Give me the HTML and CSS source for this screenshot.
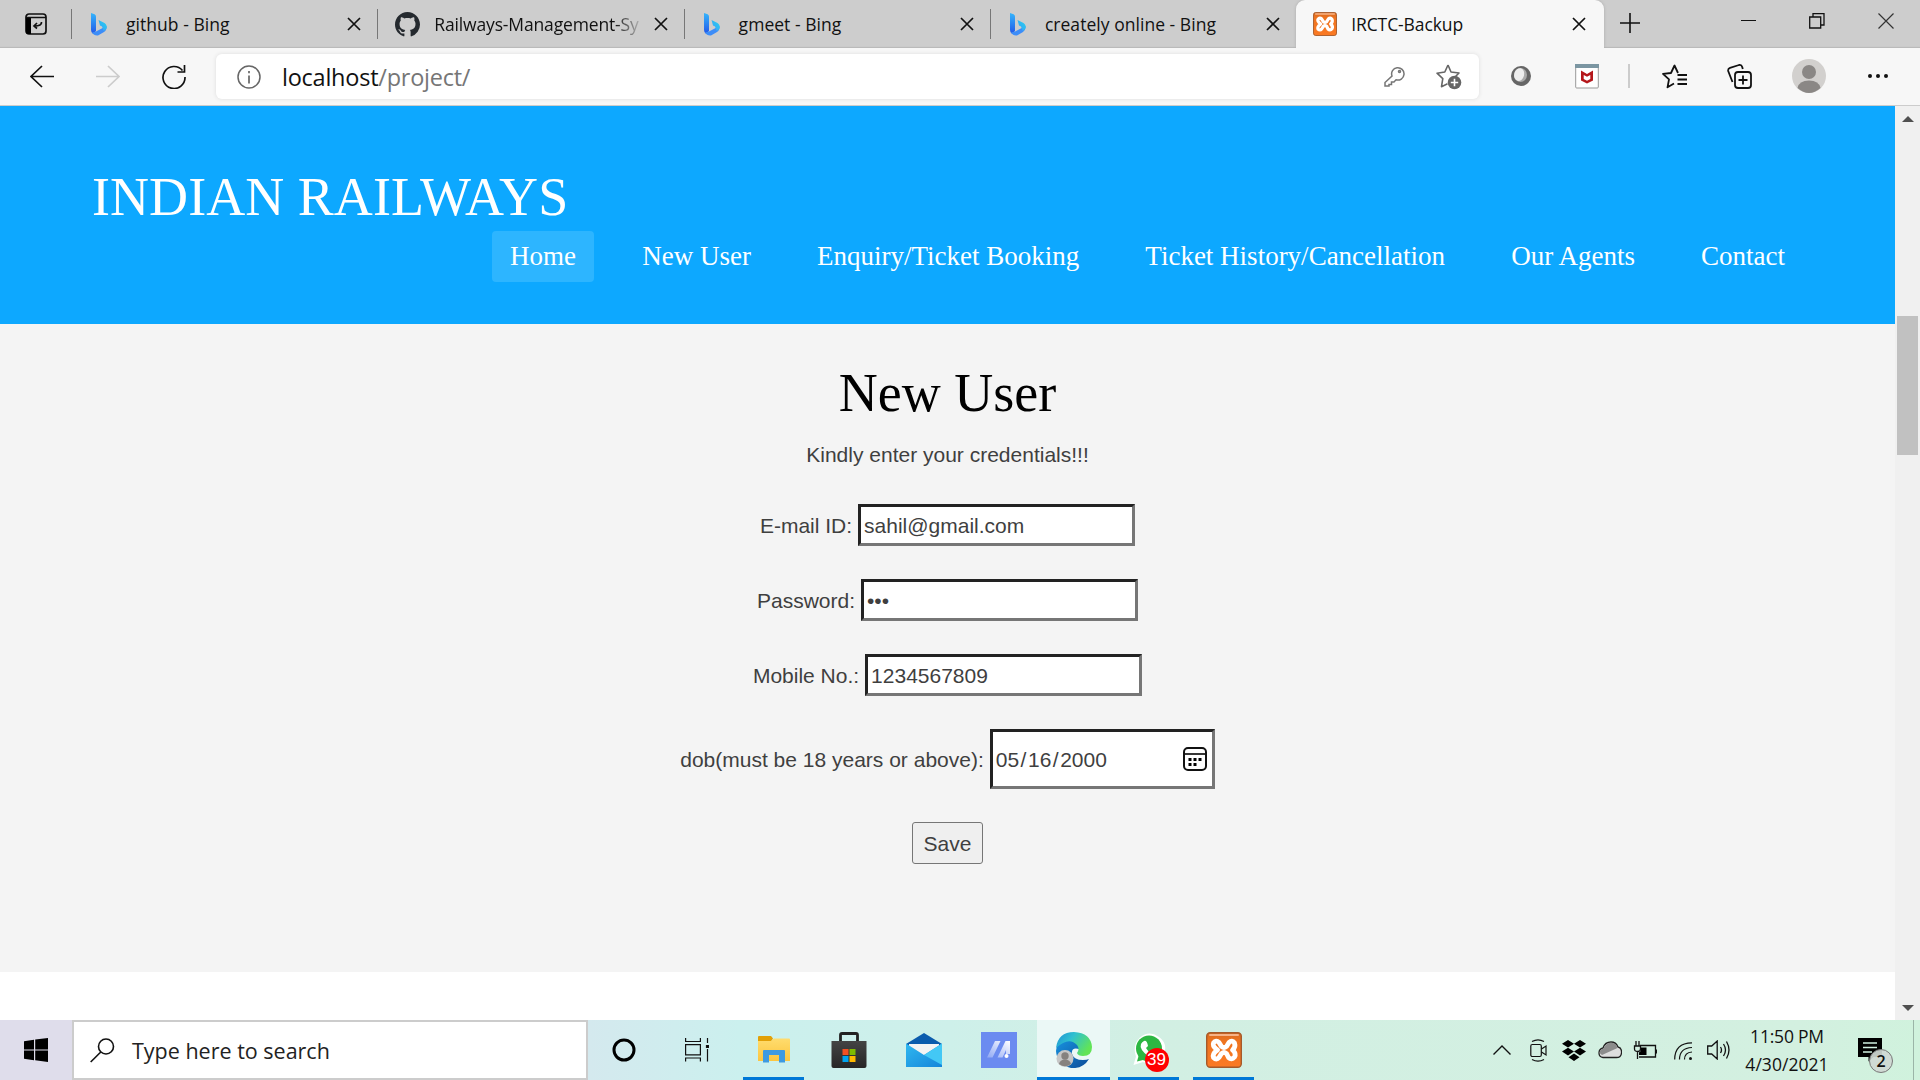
FILE: index.html
```html
<!DOCTYPE html>
<html lang="en">
<head>
<meta charset="utf-8">
<title>IRCTC-Backup</title>
<link rel="stylesheet" href="styles.css">
</head>
<body>
<svg class="defs" width="0" height="0" aria-hidden="true">
  <defs>
    <linearGradient id="bingA" x1="0" y1="0" x2="0" y2="1"><stop offset="0" stop-color="#35b5fb"/><stop offset="1" stop-color="#2257e8"/></linearGradient>
    <linearGradient id="bingB" x1="1" y1="0" x2="0" y2="1"><stop offset="0" stop-color="#25d3ef"/><stop offset="1" stop-color="#3a9cf8"/></linearGradient>
    <linearGradient id="orange" x1="0" y1="0" x2="0" y2="1"><stop offset="0" stop-color="#d96a1e"/><stop offset=".25" stop-color="#ee7420"/><stop offset="1" stop-color="#fb7a24"/></linearGradient>
    <linearGradient id="folder" x1="0" y1="0" x2="0" y2="1"><stop offset="0" stop-color="#ffdc6e"/><stop offset="1" stop-color="#fcc63f"/></linearGradient>
    <linearGradient id="bag" x1="0" y1="0" x2="0" y2="1"><stop offset="0" stop-color="#444"/><stop offset="1" stop-color="#262626"/></linearGradient>
    <linearGradient id="mail" x1="0" y1="0" x2="1" y2="1"><stop offset="0" stop-color="#2fb8f0"/><stop offset="1" stop-color="#1585da"/></linearGradient>
    <linearGradient id="edgeTop" x1="0" y1="0" x2="1" y2=".5"><stop offset="0" stop-color="#1d8fd6"/><stop offset=".45" stop-color="#2fc1d0"/><stop offset="1" stop-color="#62e456"/></linearGradient>
    <linearGradient id="edgeLow" x1="0" y1="0" x2="1" y2="1"><stop offset="0" stop-color="#1793e0"/><stop offset="1" stop-color="#0c4c98"/></linearGradient>
    <linearGradient id="ma" x1="0" y1="1" x2="1" y2="0"><stop offset="0" stop-color="#8fa8f5"/><stop offset="1" stop-color="#fff"/></linearGradient>
    <symbol id="bing" viewBox="0 0 16 23">
      <path fill="url(#bingA)" d="M0 0l3.600 1.300Q5 2 5 3.600V18l-3 2.800Q0 19.500 0 17z"/>
      <path fill="#3d8df8" d="M1 19.500Q3 23 7 22.500L13 19Q16 17 15.500 13L5 18.500Z"/>
      <path fill="url(#bingB)" d="M7.500 7l6 3q2.500 1.500 2.200 5-.7 2-3 3L11 13.500 9 12.500z"/>
    </symbol>
    <symbol id="close" viewBox="0 0 14 14"><path d="M1 1l12 12M13 1L1 13" fill="none" stroke="#111" stroke-width="1.700"/></symbol>
    <symbol id="xampp" viewBox="0 0 36 36">
      <rect x=".7" y=".7" width="34.600" height="34.600" rx="3.500" fill="url(#orange)" stroke="#a65a2a" stroke-width="1.400"/>
      <path d="M4 3h28" stroke="#f6b387" stroke-width="2" stroke-linecap="round"/>
      <path d="M11.500 18Q6 14 7.500 11Q10 7.500 13 10.500L15.500 14.500Q18 16.500 20.500 14.500L23 10.500Q26 7.500 28.500 11Q30 15 26.500 18Q30.500 21.500 28.500 25Q25.500 28.500 22.500 25.500L20.500 21.500Q18 19.500 15.500 21.500L13 25.500Q10.500 28.500 7.500 25.500Q6 22 11.500 18" fill="none" stroke="#fff" stroke-width="4.800" stroke-linecap="round" stroke-linejoin="round"/>
    </symbol>
  </defs>
</svg>

<header class="tabs">
  <div class="tab-menu"><svg width="22" height="22" viewBox="0 0 22 22"><rect x="1" y="1" width="20" height="20" rx="3" fill="none" stroke="#111" stroke-width="1.700"/><path d="M1 4h5v17H3q-2 0-2-2z"/><path d="M1 4.500h20" stroke="#111" stroke-width="1.500"/><path d="M16.500 9q.5 4-7 4M12 10l-3 3 3 2.500" fill="none" stroke="#111" stroke-width="1.700"/></svg></div>
  <div class="tab"><svg class="bing"><use href="#bing"/></svg><span class="label">github - Bing</span><svg class="x"><use href="#close"/></svg></div>
  <div class="tab"><svg class="gh" viewBox="0 0 16 16"><path fill="#24292e" fill-rule="evenodd" d="M8 0C3.580 0 0 3.580 0 8c0 3.540 2.290 6.530 5.470 7.590.4.070.55-.17.55-.38 0-.19-.01-.82-.01-1.490-2.010.37-2.530-.49-2.690-.94-.09-.23-.48-.94-.82-1.130-.28-.15-.68-.52-.01-.53.63-.01 1.080.58 1.230.82.72 1.210 1.870.87 2.330.66.070-.52.280-.87.510-1.070-1.780-.2-3.640-.89-3.640-3.950 0-.87.310-1.590.82-2.150-.08-.2-.36-1.020.08-2.120 0 0 .67-.21 2.200.82.640-.18 1.320-.27 2-.27s1.360.09 2 .27c1.530-1.040 2.200-.82 2.200-.82.440 1.100.160 1.920.080 2.120.510.560.820 1.270.820 2.150 0 3.070-1.870 3.750-3.650 3.950.290.250.540.730.540 1.480 0 1.070-.010 1.930-.010 2.200 0 .210.150.460.550.380A8.010 8.010 0 0 0 16 8c0-4.420-3.580-8-8-8z"/></svg><span class="label fade">Railways-Management-Sy</span><svg class="x"><use href="#close"/></svg></div>
  <div class="tab"><svg class="bing"><use href="#bing"/></svg><span class="label">gmeet - Bing</span><svg class="x"><use href="#close"/></svg></div>
  <div class="tab"><svg class="bing"><use href="#bing"/></svg><span class="label">creately online - Bing</span><svg class="x"><use href="#close"/></svg></div>
  <div class="tab active"><svg class="fav"><use href="#xampp"/></svg><span class="label">IRCTC-Backup</span><svg class="x"><use href="#close"/></svg></div>
  <svg class="plus" viewBox="0 0 20 20"><path d="M10 0v20M0 10h20" stroke="#111" stroke-width="1.600"/></svg>
  <div class="window-controls">
    <svg width="16" height="16"><path d="M0 7.500h15" stroke="#111"/></svg>
    <svg width="16" height="16" fill="none" stroke="#111"><path d="M.7 4h11v11H.7zM4 4V.7h11V12h-3.300" stroke-width="1.300"/></svg>
    <svg width="16" height="16"><path d="M.5.5l15 15M15.500.5l-15 15" stroke="#333" stroke-width="1.200"/></svg>
  </div>
</header>

<div class="toolbar">
  <div class="nav-buttons">
    <svg width="24" height="24" fill="none" stroke="#111" stroke-width="1.700"><path d="M24 11.500H1M12 1L1 11.500 12 22"/></svg>
    <svg width="24" height="24" fill="none" stroke="#ccc" stroke-width="1.700"><path d="M0 11.500h23M12 1l11 10.500L12 22"/></svg>
    <svg width="24" height="24" fill="none" stroke="#111" stroke-width="1.700"><path d="M20.500 5.500A11 11 0 1 0 23 12M22.500 0v7h-7"/></svg>
  </div>
  <div class="address">
    <svg width="24" height="24" fill="none" stroke="#666" stroke-width="1.500"><circle cx="12" cy="12" r="11"/><path d="M12 10.500v8M12 6v2.200" stroke-width="1.700"/></svg>
    <span class="url">localhost<i>/project/</i></span>
    <svg class="key" width="21" height="21" fill="none" stroke="#767676" stroke-width="1.500"><path d="M8 10a6.200 6.200 0 1 1 4 3.800l-2 2.200H7.500v2.500H5V20H1v-3.500z"/><circle cx="15.500" cy="5.500" r="1"/></svg>
    <svg width="26" height="26"><path d="M12 1l3 7 8 1-4 4M12 1L8.800 8 1 9.200l5.800 5.500-1.300 8 6-3" fill="none" stroke="#666" stroke-width="1.600" stroke-linejoin="round"/><circle cx="18.500" cy="18.500" r="6.800" fill="#666"/><path d="M14.800 18.500h7.400M18.500 14.800v7.400" stroke="#fff" stroke-width="1.600"/></svg>
  </div>
  <div class="actions">
    <svg class="a1" width="22" height="24"><ellipse cx="11" cy="12" rx="10" ry="10" fill="#666"/><ellipse cx="10.500" cy="11" rx="6.500" ry="7" fill="#aaa"/><ellipse cx="9.300" cy="10.500" rx="5" ry="6.500" fill="#eee" transform="rotate(15 9 10)"/></svg>
    <svg class="a2" width="24" height="25"><rect x=".7" y=".7" width="22.600" height="23.300" rx="1" fill="#fff" stroke="#999"/><path fill="#7b96a2" d="M0 0h24v4H0z"/><path fill="#b5171b" d="M6 6.500l6 3.500 6-3.500v10L12 19.500l-6-3z"/><path fill="#fff" d="M8.700 11l3.300 1.700 3.300-1.700v4L12 16.700 8.700 15z"/></svg>
    <span class="divider"></span>
    <svg class="a3" width="25" height="25" fill="none" stroke="#111" stroke-width="1.800"><path d="M16 9L12.500 1.500 9 9l-8 .8 6 5.500-1.500 8L12 19.500M15.500 11H25M15.500 15.500H25M15.500 20H25" stroke-linejoin="round"/></svg>
    <svg class="a4" width="25" height="25" fill="none" stroke="#111" stroke-width="1.800"><rect x="8" y="8" width="16" height="16" rx="3"/><path d="M16 11.500v9M11.500 16h9M5.500 18L1.200 7Q.8 4.500 3 3.800L12 1q2.500-.5 3.200 2l.6 2"/></svg>
    <svg class="a5" width="34" height="34"><circle cx="17" cy="17" r="17" fill="#d2d0ce"/><circle cx="17" cy="13" r="7" fill="#8a8785"/><path d="M5.500 29Q7 21.500 17 21.500T28.500 29Q17 39 5.500 29z" fill="#8a8785"/></svg>
    <svg class="a6" width="20" height="4" fill="#111"><circle cx="2" cy="2" r="2"/><circle cx="10" cy="2" r="2"/><circle cx="18" cy="2" r="2"/></svg>
  </div>
</div>

<div class="viewport">
  <main class="page">
    <div class="banner">
      <h1>INDIAN RAILWAYS</h1>
      <nav><a class="current">Home</a><a>New User</a><a>Enquiry/Ticket Booking</a><a>Ticket History/Cancellation</a><a>Our Agents</a><a>Contact</a></nav>
    </div>
    <section class="signup">
      <h2>New User</h2>
      <p>Kindly enter your credentials!!!</p>
      <form>
        <label class="row"><span>E-mail ID:</span><input class="field" type="text" value="sahil@gmail.com"></label>
        <label class="row"><span>Password:</span><input class="field" type="password" value="123"></label>
        <label class="row"><span>Mobile No.:</span><input class="field" type="text" value="1234567809"></label>
        <div class="row"><span>dob(must be 18 years or above):</span><div class="field date"><span>05<b>/</b>16<b>/</b>2000</span>
          <svg width="24" height="24"><rect x="1" y="1" width="22" height="22" rx="4" fill="none" stroke="#111" stroke-width="2"/><path d="M1 7h22" stroke="#111" stroke-width="1.700"/><path d="M5.500 11h3v3h-3zM10.500 11h3v3h-3zM15.500 11h3v3h-3zM5.500 16h3v3h-3zM10.500 16h3v3h-3z"/></svg></div></div>
        <button type="button">Save</button>
      </form>
    </section>
  </main>
  <aside class="scrollbar"><svg width="12" height="6"><path fill="#505050" d="M0 6L6 0l6 6z"/></svg><div class="thumb"></div><svg class="down" width="12" height="6"><path fill="#505050" d="M0 0l6 6 6-6z"/></svg></aside>
</div>

<footer class="taskbar">
  <div class="start"><svg width="24" height="24"><path d="M0 3.300l10-1.500v9.700H0zM11.200 1.600L24 0v11.500H11.200zM0 12.600h10v9.600L0 20.800zM11.200 12.600H24V24l-12.800-1.700z"/></svg></div>
  <div class="search"><svg width="25" height="25" fill="none" stroke="#111" stroke-width="1.600"><circle cx="16" cy="8.500" r="7.500"/><path d="M10.800 14L.7 24"/></svg><span>Type here to search</span></div>
  <div class="apps">
    <div class="app cortana"><svg width="26" height="26"><circle cx="13" cy="13" r="10" fill="none" stroke="#000" stroke-width="3"/></svg></div>
    <div class="app taskview"><svg width="24" height="24" fill="none" stroke="#111" stroke-width="1.200"><path d="M.6 6.600h14.800v10.200H.6zM.6 0v3.500h14.800V0M.6 23.500V20h14.800v3.500M22.500 0v5M22.500 11v12.500"/><path fill="#000" d="M21.500 7.500h2v2h-2z"/></svg></div>
    <div class="app open"><svg width="32" height="28"><path fill="#e2a007" d="M0 1q0-1 1-1h12l2 2.500-2 3H0z"/><path fill="url(#folder)" d="M0 5h13l3-2.500h15q1 0 1 1V25H0z"/><path fill="#3e9ae0" d="M5 26.500V15q0-1 1-1h20q1 0 1 1v11.500h-6V19H11v7.500z"/></svg></div>
    <div class="app"><svg width="36" height="36"><path d="M9.500 12V3q0-1.500 1.500-1.500h14q1.500 0 1.500 1.500v9" fill="none" stroke="#222" stroke-width="2.800"/><path fill="url(#bag)" d="M.5 9h35v25q0 2-2 2h-31q-2 0-2-2z"/><path fill="#f25022" d="M11.500 17h6v6h-6z"/><path fill="#7fba00" d="M18.500 17h6v6h-6z"/><path fill="#00a4ef" d="M11.500 24h6v6h-6z"/><path fill="#ffb900" d="M18.500 24h6v6h-6z"/></svg></div>
    <div class="app"><svg width="36" height="34"><path fill="#0b5cad" d="M0 11L18 0l18 11v10H0z"/><path fill="#f4f4f4" d="M3 11h30v10L18 24 3 19z"/><path fill="url(#mail)" d="M0 10.500L18 22l18-11.500V34H0z"/><path fill="#43c8f5" d="M36 10.500V32L18 22z"/></svg></div>
    <div class="app"><svg width="36" height="36"><path fill="#6b8bf0" d="M0 0h36v36H0z"/><path fill="url(#ma)" d="M6 25.500L14 9h5.500l-8 16.500zM16.500 25.500L24.500 9H29v13h-4v-4l-3.500 7.500z"/><circle cx="25.500" cy="24" r="2" fill="#fff"/></svg></div>
    <div class="app open focused"><svg width="36" height="36"><path fill="url(#edgeLow)" d="M0 19Q1 6 16 8q8 1 7 9-8-2-7 5 2 6 11 6 4 0 6-1Q27 37 15 36 1 33 0 19z"/><path fill="url(#edgeTop)" d="M0 16Q2 0 18 0q17 1 18 15 0 9-9 9-5 0-6-3 3-4 0-8Q13 4 0 16z"/><circle cx="9" cy="26.500" r="8.500" fill="#c6c6c6"/><circle cx="9" cy="24" r="3.700" fill="#85817e"/><path fill="#85817e" d="M3 32q1-4.500 6-4.500t6 4.500q-6 4.500-12 0z"/></svg></div>
    <div class="app open"><div class="whatsapp"><svg width="34" height="34"><path fill="#fff" d="M1.500 32L4 23.500Q0 12 8 4.500 17-3 27 4t4 20q-8 10-20 5z"/><circle cx="17" cy="15.500" r="13" fill="#2cb742"/><path fill="#2cb742" d="M5 28.500l2-7 6 5z"/><path fill="#fff" d="M12 8q3-1 4 5l-2 2q2 4 6 6l2-2q5 1 4 4-3 4-10 0-9-7-7-12 1-2 3-3z"/></svg><span class="badge">39</span></div></div>
    <div class="app open"><svg width="36" height="36"><use href="#xampp"/></svg></div>
  </div>
  <div class="tray">
    <svg width="18" height="10" fill="none" stroke="#111" stroke-width="1.400"><path d="M.5 9.500L9 1l8.500 8.500"/></svg>
    <svg class="meet" width="17" height="23" fill="none" stroke="#111" stroke-width="1.200"><rect x=".8" y="5.500" width="10.500" height="12" rx="1.500"/><path d="M11.500 10l4.500-3v9l-4.500-3M2 2.500Q8-.8 14 2.500M2 20.500q6 3.300 12 0"/></svg>
    <svg class="dbx" width="24" height="21"><path d="M6 0l6 3.800-6 3.800L0 3.800zM18 0l6 3.800-6 3.800-6-3.800zM6 7.800l6 3.800-6 3.800-6-3.800zM18 7.800l6 3.800-6 3.800-6-3.800zM12 13.500l5.500 3.700L12 21l-5.500-3.800z"/></svg>
    <svg class="cloud" width="24" height="18"><path fill="#dedede" stroke="#222" stroke-width="1.300" d="M5 16.500Q1 16 1 12t4-5q2-6 8-6 5 0 7 5 4 1 3.500 6-.5 4.500-5 4.500z"/><path fill="#8c8c8c" d="M1.500 12Q2 8 5.500 7.500 8 1.800 13 1.800T19.500 7L4 14z"/></svg>
    <svg class="bat" width="24" height="18"><path d="M7 4.500h15.500v11.500H6M23.500 8.500v4M1.500 5h6v3q0 2.500-3 2.500T1.500 8zM3 0v5M6 0v5M4.500 10.500V18" fill="none" stroke="#111" stroke-width="1.300"/><path d="M8 6.500h5.500V14H6v-2.500q2-1 2-3z"/></svg>
    <svg class="wifi" width="19" height="18" fill="none" stroke="#111" stroke-width="1.200"><path d="M.7 17.500Q.7 1 18 .8M5.500 17.500Q5.500 6 18 5.500M10.500 17.500q0-7 7.500-7.500"/><circle cx="16.500" cy="16.500" r="1.500" fill="#111" stroke="none"/></svg>
    <svg class="vol" width="23" height="20" fill="none" stroke="#111" stroke-width="1.300"><path d="M.7 6h4l5.500-5v18l-5.500-5h-4zM13.500 7q2 3 0 6M16.500 4q4 6 0 12M19.500 1.500q5 8.500 0 17"/></svg>
    <div class="clock"><span>11:50 PM</span><span class="day">4/30/2021</span></div>
    <div class="notes"><svg width="24" height="24"><path d="M0 0h24v19h-8.500l-5 4.500V19H0z"/><path d="M5 5h14M5 9.500h14M5 14h9" stroke="#d0efe0" stroke-width="1.400"/></svg><span class="count">2</span></div>
    <span class="peek"></span>
  </div>
</footer>
</body>
</html>
```

FILE: styles.css
```css
* { box-sizing: border-box; }
body { margin: 0; width: 1920px; height: 1080px; overflow: hidden; display: flex; flex-direction: column; font-family: "Open Sans", "Noto Sans", sans-serif; color: #111; }
svg { display: block; flex: none; }
.defs { position: absolute; }

.tabs { height: 48px; flex: none; display: flex; background: #cdcdcd; box-shadow: inset 0 -2px 1px -1px #b8b8b8; }
.tab-menu { width: 71px; padding: 13px 0 0 25px; }
.tab { width: 306.300px; display: flex; align-items: center; padding-left: 20px; position: relative; }
.tab:not(.active)::before { content: ""; position: absolute; left: 0; top: 9px; height: 30px; border-left: 1px solid #777; }
.tab .bing { width: 16px; height: 23px; margin-right: 19px; }
.tab .gh { width: 25px; height: 25px; margin: 0 14px 0 -2px; }
.tab .fav { width: 24px; height: 24px; margin-right: 14px; }
.tab .x { width: 14px; height: 14px; margin-left: auto; margin-right: 16px; }
.tab.active { width: 308px; background: #f7f7f7; border-radius: 9px 9px 0 0; padding-left: 17px; box-shadow: 0 0 3px #aaa; clip-path: inset(0 -4px 0 -4px); }
.tab.active .x { margin-right: 18px; }
.label { font-size: 17.500px; line-height: 24px; margin-top: -1px; white-space: nowrap; letter-spacing: .04px; }
.tab.active .label { letter-spacing: -.1px; }
.fade { width: 208px; letter-spacing: -.15px; -webkit-mask-image: linear-gradient(90deg, #000 180px, transparent 210px); mask-image: linear-gradient(90deg, #000 180px, transparent 210px); }
.plus { width: 20px; height: 20px; margin: 13px 0 0 16px; }
.window-controls { display: flex; gap: 52.500px; margin: 13px 26.500px 0 auto; }

.toolbar { height: 58px; flex: none; background: #f7f7f7; border-bottom: 1px solid #ccc; display: flex; align-items: center; }
.nav-buttons { width: 216px; display: flex; gap: 42px; padding-left: 30px; }
.address { width: 1263px; height: 45px; background: #fff; border-radius: 6px; box-shadow: 0 0 4px #ddd; display: flex; align-items: center; padding: 0 17px 0 21px; }
.url { margin-left: 21px; font-size: 23.500px; letter-spacing: -.24px; line-height: 32px; }
.url i { font-style: normal; color: #767676; }
.key { margin: 0 31px 0 auto; }
.actions { flex: 1; display: flex; align-items: center; margin-top: -1px; }
.a1 { margin-left: 31px; }
.a2 { margin-left: 43px; }
.divider { width: 2px; height: 24px; margin: 0 32px 0 29px; background: #ccc; }
.a4 { margin-left: 40px; }
.a5 { margin-left: 40px; }
.a6 { margin-left: 42px; }

.viewport { height: 914px; flex: none; display: flex; }
.page { width: 1895px; background: #fff; font-family: "Liberation Sans", Arial, sans-serif; }
.banner { height: 218px; background: #0da8ff; padding: 60px 92px 0; color: #fff; font-family: "Liberation Serif", "Times New Roman", serif; }
h1 { margin: 0 0 3px; font-size: 54px; font-weight: 400; line-height: 62px; letter-spacing: .05px; }
nav { display: flex; justify-content: flex-end; gap: 30.100px; }
nav a { padding: 0 18px; height: 51px; line-height: 51px; font-size: 27px; border-radius: 4px; }
nav .current { background: #2db5ff; }
.signup { height: 648px; background: #f4f4f4; padding-top: 38px; text-align: center; font-size: 21px; color: #3f3f3f; }
h2 { margin: 0; font: 400 54px/62px "Liberation Serif", "Times New Roman", serif; color: #000; }
.signup p { margin: 18px 0 0; line-height: 26px; }
form { display: flex; flex-direction: column; align-items: center; gap: 33px; margin-top: 36px; }
.row { display: flex; align-items: center; gap: 6px; }
.row > span { padding-top: 1px; }
.field { width: 277px; height: 42px; background: #fff; border: 3px solid; border-color: #222 #767676 #767676 #222; padding: 1px 3px 0; font: 21px "Liberation Sans", Arial, sans-serif; color: #3f3f3f; outline: 0; border-radius: 0; }
.date { width: 225px; height: 60px; display: flex; justify-content: space-between; align-items: center; padding-right: 5px; }
.date b { font-weight: 400; padding: 0 1.500px; }
.date svg { margin-top: -2px; }
button { width: 71px; height: 42px; border: 1px solid #767676; border-radius: 3px; background: #efefef; padding: 1px 0 0; font: 21px "Liberation Sans", Arial, sans-serif; color: #3f3f3f; }
.scrollbar { width: 25px; background: #f0f0f0; display: flex; flex-direction: column; align-items: center; padding: 10px 0 9px; }
.thumb { width: 21px; height: 139px; margin-top: 194px; background: #c1c1c1; }
.down { margin-top: auto; }

.taskbar { height: 60px; flex: none; display: flex; background: linear-gradient(90deg, #dfddeb 0, #dfddeb 72px, #d4e9ee 590px, #cbf0ee 740px, #cef0ea 950px, #d2efe3 1150px, #d3f0e0 1800px, #d0f2dd 1920px); }
.start { width: 72px; padding: 18px 24px; }
.search { width: 516px; background: #fff; border: 2px solid #ccc; display: flex; align-items: center; padding: 0 16px; gap: 17px; font-size: 21.500px; letter-spacing: 0; color: #222; }
.search span { padding-top: 1px; }
.apps { display: flex; }
.app { width: 75px; height: 60px; display: flex; justify-content: center; align-items: center; position: relative; }
.cortana { width: 72px; }
.taskview { width: 76px; padding-right: 3px; }
.app.open::after { content: ""; position: absolute; bottom: 0; left: 7px; width: 61px; height: 3px; background: #0078d7; }
.app.focused { background: #ebf8f6; width: 73px; margin: 0 1px; }
.app.focused::after { left: 0; width: 100%; }
.whatsapp { position: relative; }
.badge { position: absolute; left: 13px; top: 15px; width: 24px; height: 24px; border-radius: 50%; background: #f00; color: #fff; font: 17px/24px "Liberation Sans", Arial, sans-serif; text-align: center; }
.tray { margin-left: auto; display: flex; align-items: center; }
.meet { margin-left: 19px; }
.dbx { margin-left: 15px; }
.cloud { margin-left: 12px; }
.bat { margin-left: 11px; }
.wifi { margin-left: 17px; margin-top: 2px; }
.vol { margin-left: 14px; }
.clock { width: 86px; margin-left: 14px; display: flex; flex-direction: column; align-items: center; font-size: 17.500px; line-height: 28px; letter-spacing: -.2px; white-space: nowrap; }
.day { letter-spacing: .05px; }
.notes { margin-left: 28px; position: relative; }
.count { position: absolute; left: 11px; top: 11px; width: 24px; height: 24px; border-radius: 50%; background: rgba(207, 216, 211, .92); border: 1px solid #777; font-size: 16px; line-height: 22px; text-align: center; font-weight: 600; }
.peek { width: 7px; height: 60px; margin-left: 31px; border-left: 1px solid #9bb5a8; }
```
